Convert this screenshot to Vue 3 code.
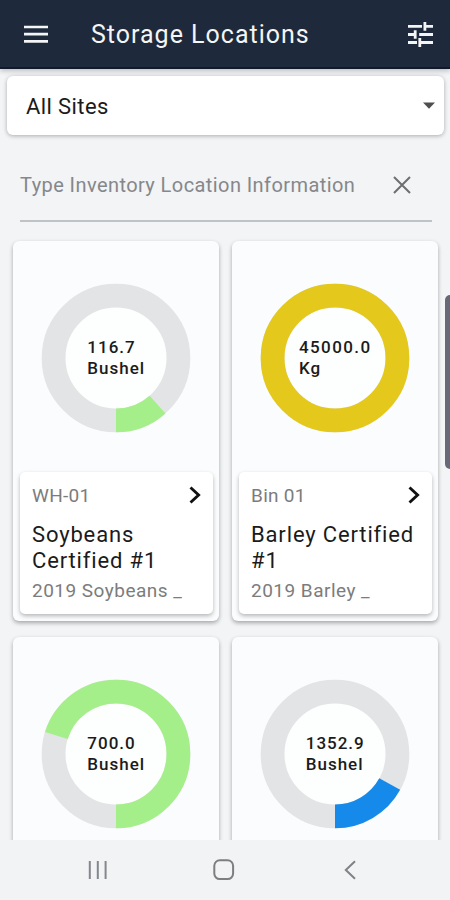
<script setup>
const locations = [
  { id: 'soy', amount: '116.7', unit: 'Bushel', level: 11.6, tone: 'green', code: 'WH-01', name: ['Soybeans', 'Certified #1'], crop: '2019 Soybeans _' },
  { id: 'barley', amount: '45000.0', unit: 'Kg', level: 100, tone: 'yellow', code: 'Bin 01', name: ['Barley Certified', '#1'], crop: '2019 Barley _' },
  { id: 'third', amount: '700.0', unit: 'Bushel', level: 70.2, tone: 'green' },
  { id: 'fourth', amount: '1352.9', unit: 'Bushel', level: 17, tone: 'blue' },
]
</script>

<template>
  <div class="screen">
    <header class="bar">
      <svg class="menu" width="24" height="18" viewBox="0 0 24 18">
        <path d="M0 2h24M0 9.2h24M0 16.3h24" stroke="#f4f5f5" stroke-width="2.7" />
      </svg>
      <h1 class="title">Storage Locations</h1>
      <svg class="tune" width="25" height="25" viewBox="0 0 25 25">
        <path d="M0 4.4h14M17 4.4h8M16.9 0v8.8M0 12.5h8M11.2 12.5h13.8M7.2 8.2v8.6M0 20.5h9M12 20.5h13M11.8 16.1v8.9" fill="none" stroke="#f4f5f5" stroke-width="2.8" />
      </svg>
    </header>

    <main class="content">
      <div class="select">
        <span class="select-text">All Sites</span>
        <svg width="12" height="7" viewBox="0 0 12 7"><path d="M0 .5h12L6 6.8z" fill="#4f4f4f" /></svg>
      </div>

      <div class="search">
        <span class="placeholder">Type Inventory Location Information</span>
        <svg width="18" height="18" viewBox="0 0 18 18"><path d="M1 1l16 16M17 1L1 17" stroke="#6d6e70" stroke-width="2" /></svg>
      </div>

      <div class="grid">
        <article v-for="l in locations" :key="l.id" class="card">
          <div class="gauge">
            <svg class="ring" width="150" height="150" viewBox="-75 -75 150 150">
              <circle class="hole" r="51" />
              <circle class="track" r="62.4" />
              <circle class="level" :class="l.tone" r="62.4" pathLength="100" :stroke-dasharray="l.level === 100 ? 'none' : `${l.level} 100`" transform="rotate(90) scale(1 -1)" />
            </svg>
            <div class="amount"><span :class="'value-' + l.id">{{ l.amount }}</span><span>{{ l.unit }}</span></div>
          </div>
          <div v-if="l.name" class="info">
            <div class="code-row">
              <span class="code">{{ l.code }}</span>
              <svg width="12" height="18" viewBox="0 0 12 18"><path d="M1.5 1.5L9.6 9l-8.1 7.5" fill="none" stroke="#111" stroke-width="2.9" /></svg>
            </div>
            <div class="name"><span v-for="line in l.name" :key="line" class="line">{{ line }}</span></div>
            <div class="crop">{{ l.crop }}</div>
          </div>
        </article>
      </div>
      <div class="scrollbar"></div>
    </main>

    <nav class="nav">
      <svg width="20" height="20" viewBox="0 0 20 20"><path d="M1.8 1v18M9.8 1v18M17.6 1v18" stroke="#85878a" stroke-width="2" /></svg>
      <svg class="home" width="22" height="22" viewBox="0 0 22 22"><rect x="1.3" y="1.3" width="18.8" height="18.8" rx="5.5" fill="none" stroke="#7c7e81" stroke-width="2" /></svg>
      <svg width="12" height="20" viewBox="0 0 12 20"><path d="M11 1.2L1.8 10l9.2 8.8" fill="none" stroke="#808285" stroke-width="2" /></svg>
    </nav>
  </div>
</template>

<style>
body { background: #f1f3f5; }
</style>

<style scoped>
.screen {
  width: 450px;
  height: 900px;
  display: flex;
  flex-direction: column;
  overflow: hidden;
  background: #f2f4f6;
  font-family: Roboto, "Noto Sans", sans-serif;
  color: #1b1b1b;
}
svg { display: block; flex: none; }
.bar {
  position: relative;
  z-index: 1;
  box-sizing: border-box;
  flex: none;
  height: 69px;
  padding: 0 17px 0 23.5px;
  display: flex;
  align-items: center;
  background: #1e293b;
  border-bottom: 2px solid #101a2a;
  box-shadow: 0 2px 5px rgba(0, 0, 0, .22);
}
.title {
  margin: 2px auto 0 43.5px;
  font-size: 25px;
  font-weight: 400;
  letter-spacing: 1px;
  color: #f4f5f5;
  white-space: nowrap;
}
.menu, .tune { margin-top: 1px; }
.content {
  position: relative;
  flex: none;
  height: 771px;
  overflow: hidden;
}
.select {
  box-sizing: border-box;
  height: 59px;
  margin: 7px 6px 0 7px;
  padding: 0 9px 0 19px;
  display: flex;
  align-items: center;
  justify-content: space-between;
  background: #fff;
  border-radius: 6px;
  box-shadow: 0 1px 4px rgba(0, 0, 0, .3);
}
.select-text { padding-top: 2px; font-size: 22px; letter-spacing: .4px; }
.search {
  box-sizing: border-box;
  height: 87px;
  margin: 0 18px 0 20px;
  padding: 14px 21px 0 0;
  display: flex;
  align-items: center;
  justify-content: space-between;
  border-bottom: 2px solid #c0c3c5;
}
.placeholder {
  font-size: 20px;
  letter-spacing: .42px;
  color: #85878a;
  white-space: nowrap;
}
.grid {
  display: grid;
  grid-template-columns: 206px 206px;
  grid-auto-rows: 380px;
  gap: 16px 13px;
  padding: 19px 12px 0 13px;
}
.card {
  box-sizing: border-box;
  padding: 42px 6px 7px 6.5px;
  background: #fafcfd;
  border-radius: 6px;
  box-shadow: 0 2px 4px rgba(0, 0, 0, .32);
}
.gauge {
  display: grid;
  place-items: center;
  height: 150px;
}
.gauge > * { grid-area: 1 / 1; }
.hole { fill: #fdfefe; }
.track, .level { fill: none; stroke-width: 23.8; }
.track { stroke: #e3e4e5; }
.level.green { stroke: #a5ef8a; }
.level.yellow { stroke: #e4c91c; }
.level.blue { stroke: #168aeb; }
.amount {
  display: flex;
  flex-direction: column;
  font-size: 17px;
  font-weight: 500;
  line-height: 21px;
  letter-spacing: 1px;
}
.value-barley { letter-spacing: 1.4px; }
.info {
  box-sizing: border-box;
  height: 142px;
  margin-top: 39px;
  padding: 12px 12.5px 0 12.5px;
  background: #fff;
  border-radius: 5px;
  box-shadow: 0 2px 4px rgba(0, 0, 0, .28);
}
.code-row {
  height: 22px;
  display: flex;
  align-items: center;
  justify-content: space-between;
}
.code { font-size: 19px; letter-spacing: .3px; color: #7c7c7c; }
.name {
  margin-top: 16px;
  font-size: 22px;
  line-height: 26px;
  letter-spacing: .85px;
  white-space: nowrap;
}
.line { display: block; }
.crop {
  margin-top: 5px;
  font-size: 19px;
  line-height: 24px;
  letter-spacing: .48px;
  color: #7c7c7c;
  white-space: nowrap;
}
.scrollbar {
  position: absolute;
  top: 226px;
  right: -5px;
  width: 10px;
  height: 174px;
  border-radius: 5px;
  background: #686777;
}
.nav {
  flex: none;
  height: 60px;
  box-sizing: border-box;
  padding: 0 94px 0 88px;
  display: flex;
  align-items: center;
  justify-content: space-between;
  background: #f1f3f5;
}
.home { margin-right: 4px; }
</style>
